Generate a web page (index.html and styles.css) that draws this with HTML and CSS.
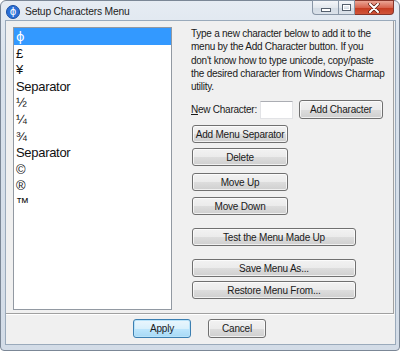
FILE: index.html
```html
<!DOCTYPE html>
<html lang="en">
<head>
    <meta charset="UTF-8">
    <title>Setup Characters Menu</title>
    <link rel="stylesheet" href="styles.css">
</head>
<body>
    <div class="window">
        <!-- Title bar -->
        <div class="titlebar">
            <span class="app-icon">ϕ</span>
            <span class="title">Setup Characters Menu</span>
            <div class="controls">
                <span class="ctl ctl-min"><i></i></span>
                <span class="ctl ctl-max"><i></i></span>
                <span class="ctl ctl-close">
                    <svg width="14" height="10" viewBox="0 0 14 10">
                        <path d="M3 1 L11 9 M11 1 L3 9" stroke="#5a1a10" stroke-width="3.4" stroke-linecap="round"/>
                        <path d="M3 1 L11 9 M11 1 L3 9" stroke="#fff" stroke-width="2" stroke-linecap="round"/>
                    </svg>
                </span>
            </div>
        </div>

        <div class="client">
            <div class="panel">
                <ul class="char-list">
                    <li class="selected">ϕ</li>
                    <li>£</li>
                    <li>¥</li>
                    <li>Separator</li>
                    <li>½</li>
                    <li>¼</li>
                    <li>¾</li>
                    <li>Separator</li>
                    <li>©</li>
                    <li>®</li>
                    <li>™</li>
                </ul>

                <div class="side">
                    <p class="hint">
                        Type a new character below to add it to the<br>
                        menu by the Add Character button. If you<br>
                        don't know how to type unicode, copy/paste<br>
                        the desired character from Windows Charmap<br>
                        utility.
                    </p>
                    <div class="new-row">
                        <label><u>N</u>ew Character:</label>
                        <span class="char-input"></span>
                        <button class="btn btn-add">Add Character</button>
                    </div>
                    <button class="btn btn-small gap-sep">Add Menu Separator</button>
                    <button class="btn btn-small gap-del">Delete</button>
                    <button class="btn btn-small gap-up">Move Up</button>
                    <button class="btn btn-small gap-down">Move Down</button>
                    <button class="btn btn-wide gap-test">Test the Menu Made Up</button>
                    <button class="btn btn-wide gap-save">Save Menu As...</button>
                    <button class="btn btn-wide gap-restore">Restore Menu From...</button>
                </div>
            </div>

            <div class="footer">
                <button class="btn btn-footer btn-default">Apply</button>
                <button class="btn btn-footer">Cancel</button>
            </div>
        </div>
    </div>
</body>
</html>
```

FILE: styles.css
```css
body {
    margin: 0;
    background: #fff;
    font-family: 'Liberation Sans', Arial, sans-serif;
}
.window {
    width: 400px;
    height: 351px;
    box-sizing: border-box;
    border: 1px solid #7b8796;
    border-radius: 6px 6px 4px 4px;
    background: linear-gradient(#e6ecf3, #d9e2ec 60px, #d3dce7);
    padding: 0 3px 5px 4px;
    display: flex;
    flex-direction: column;
}
/* Title bar */
.titlebar {
    height: 19px;
    display: flex;
    align-items: center;
}
.app-icon {
    width: 12px;
    height: 12px;
    border-radius: 50%;
    background: #2a6fd6;
    border: 1px solid #1a4fa3;
    color: #fff;
    font-family: 'DejaVu Sans', sans-serif;
    font-size: 10px;
    line-height: 12px;
    text-align: center;
    margin-left: 1px;
    margin-top: 2px;
}
.title {
    font-size: 10.3px;
    letter-spacing: -0.2px;
    color: #1e1e1e;
    margin-left: 5px;
    margin-top: 2px;
}
.controls {
    margin-left: auto;
    align-self: flex-start;
    display: flex;
    margin-top: -1px;
    margin-right: 2px;
}
.ctl {
    height: 15px;
    box-sizing: border-box;
    border: 1px solid #8996a6;
    display: flex;
    align-items: center;
    justify-content: center;
}
.ctl-min {
    width: 26px;
    border-right: none;
    border-radius: 0 0 0 4px;
    background: linear-gradient(#f4f6f9, #e3e8ee 50%, #d3dbe4 51%, #dbe2ea);
}
.ctl-min i {
    width: 8px;
    height: 2px;
    border: 1px solid #55606e;
    background: #fff;
    margin-top: 4px;
}
.ctl-max {
    width: 17px;
    background: linear-gradient(#f4f6f9, #e3e8ee 50%, #d3dbe4 51%, #dbe2ea);
}
.ctl-max i {
    width: 7px;
    height: 5px;
    border: 1px solid #55606e;
    box-shadow: inset 0 0 0 1px #fff;
}
.ctl-close {
    width: 39px;
    border-left: none;
    border-color: #86352a;
    border-radius: 0 0 4px 0;
    background: linear-gradient(#eba595, #d8654f 50%, #c53a1f 51%, #d0553a);
}
/* Client area */
.client {
    flex: 1;
    background: #f0f0f0;
    border: 1px solid #9aaabb;
    display: flex;
    flex-direction: column;
}
.panel {
    display: flex;
    height: 293px;
    box-sizing: border-box;
    margin-right: 1px;
    border-right: 1px solid #a0a0a0;
    border-bottom: 1px solid #a0a0a0;
    box-shadow: 0 1px 0 #fff;
    padding: 6px 0 3px 7px;
}
.char-list {
    list-style: none;
    margin: 0;
    padding: 0;
    width: 159px;
    box-sizing: border-box;
    border: 1px solid #9299a2;
    background: #fff;
    font-size: 13px;
    letter-spacing: -0.3px;
    color: #111;
}
.char-list li {
    height: 16.6px;
    line-height: 17px;
    padding-left: 2px;
    white-space: nowrap;
}
.char-list li.selected {
    background: #3399ff;
    color: #fff;
    font-family: 'DejaVu Sans', sans-serif;
}
.side {
    margin-left: 19px;
    display: flex;
    flex-direction: column;
    align-items: flex-start;
    font-size: 10px;
    letter-spacing: -0.25px;
    color: #1a1a1a;
}
.hint {
    margin: 0;
    line-height: 13.3px;
    white-space: nowrap;
}
.new-row {
    display: flex;
    align-items: center;
    margin-top: 7px;
}
.new-row label {
    width: 69px;
}
.char-input {
    width: 33px;
    height: 18px;
    box-sizing: border-box;
    background: #fff;
    border: 1px solid #e2e3e6;
    border-top-color: #abadb3;
}
.btn {
    font-family: 'Liberation Sans', Arial, sans-serif;
    font-size: 10px;
    letter-spacing: -0.2px;
    color: #1a1a1a;
    height: 18px;
    box-sizing: border-box;
    padding: 0;
    border: 1px solid #707070;
    border-radius: 3px;
    background: linear-gradient(#f2f2f2, #ebebeb 50%, #dddddd 51%, #cfcfcf);
    box-shadow: inset 0 0 0 1px rgba(255,255,255,0.7);
}
.btn-add {
    width: 84px;
    margin-left: 6px;
    height: 19px;
}
.btn-small {
    width: 96px;
    margin-left: 1px;
}
.btn-wide {
    width: 164px;
    margin-left: 1px;
}
.gap-sep { margin-top: 6px; }
.gap-del { margin-top: 5px; }
.gap-up { margin-top: 7px; }
.gap-down { margin-top: 6px; }
.gap-test { margin-top: 13px; }
.gap-save { margin-top: 13px; }
.gap-restore { margin-top: 4px; }
/* Footer */
.footer {
    flex: 1;
    display: flex;
    justify-content: center;
    align-items: flex-start;
    gap: 17px;
    padding-top: 5px;
    padding-right: 2px;
}
.btn-footer {
    width: 58px;
    height: 19px;
}
.btn-default {
    border-color: #3c7fb1;
    background: linear-gradient(#eaf6fd, #d9f0fc 50%, #bee6fd 51%, #a7d9f5);
    box-shadow: inset 0 0 0 1px #b9e3fa;
}
```
